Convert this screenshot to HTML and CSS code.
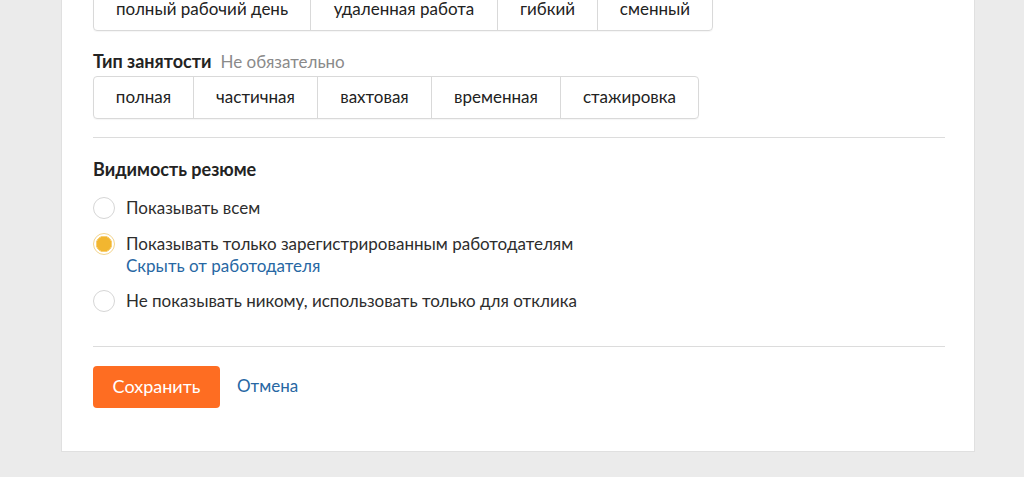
FILE: index.html
```html
<!DOCTYPE html>
<html lang="ru">
<head>
<meta charset="utf-8">
<link rel="stylesheet" href="styles.css">
</head>
<body>
<div class="card">
  <div class="segments seg-top">
    <span class="seg seg-a">полный рабочий день</span>
    <span class="seg seg-b">удаленная работа</span>
    <span class="seg seg-c">гибкий</span>
    <span class="seg seg-d">сменный</span>
  </div>

  <div class="field-label"><b>Тип занятости</b><span class="optional">Не обязательно</span></div>
  <div class="segments">
    <span class="seg s1">полная</span>
    <span class="seg s2">частичная</span>
    <span class="seg s3">вахтовая</span>
    <span class="seg s4">временная</span>
    <span class="seg s5">стажировка</span>
  </div>

  <hr class="divider first">

  <h3 class="section-title">Видимость резюме</h3>
  <div class="radios">
    <label class="radio"><span class="dot"></span><span class="radio-text">Показывать всем</span></label>
    <label class="radio checked"><span class="dot"></span><span class="radio-text">Показывать только зарегистрированным работодателям<a class="link" href="#">Скрыть от работодателя</a></span></label>
    <label class="radio"><span class="dot"></span><span class="radio-text">Не показывать никому, использовать только для отклика</span></label>
  </div>

  <hr class="divider second">

  <div class="actions">
    <button class="save">Сохранить</button>
    <a class="cancel" href="#">Отмена</a>
  </div>
</div>
</body>
</html>
```

FILE: styles.css
```css
* { box-sizing: border-box; }
html, body { margin: 0; padding: 0; }
body {
  background: #ebebeb;
  font-family: Lato, "Open Sans", Arial, sans-serif;
  color: #232323;
  height: 477px;
  overflow: hidden;
}
.card {
  background: #fff;
  border: 1px solid #e0e0e0;
  border-top: none;
  margin: -12px 0 0 61px;
  width: 914px;
  padding: 0 29px 43px 31px;
}
.segments {
  display: inline-flex;
  border: 1px solid #d9d9d9;
  border-radius: 4px;
  height: 43px;
  box-shadow: 0 1px 1px rgba(0,0,0,0.04);
}
.seg {
  display: flex;
  align-items: center;
  justify-content: center;
  font-size: 17px;
  color: #222;
  border-left: 1px solid #d9d9d9;
  padding-bottom: 2px;
}
.seg:first-child { border-left: none; }
.seg-a { width: 216px; }
.seg-b { width: 187px; }
.seg-c { width: 100px; }
.seg-d { width: 115px; }
.s1 { width: 99px; }
.s2 { width: 124px; }
.s3 { width: 114px; }
.s4 { width: 129px; }
.s5 { width: 138px; }

.field-label {
  margin-top: 20px;
  margin-bottom: 4px;
  line-height: 20px;
  display: flex;
  align-items: baseline;
  gap: 9px;
}
.field-label b { font-weight: 700; color: #232323; font-size: 18px; }
.optional { color: #8a8a8a; font-size: 17px; }

.divider {
  border: none;
  border-top: 1px solid #dcdcdc;
  margin: 18px 0 0;
  height: 0;
}
.section-title {
  margin: 20px 0 0;
  font-size: 18px;
  line-height: 22px;
  font-weight: 700;
  color: #232323;
}
.radios {
  display: flex;
  flex-direction: column;
  gap: 15px;
  margin-top: 18px;
}
.radio {
  display: flex;
  align-items: flex-start;
  gap: 11px;
  font-size: 17px;
  line-height: 20px;
  color: #2d2d2d;
}
.dot {
  width: 22px;
  height: 22px;
  border-radius: 50%;
  border: 1px solid #d6d6d6;
  background: #fff;
  flex: none;
  margin-top: -1px;
}
.checked .dot {
  border: 1px solid #f3d58e;
  background: radial-gradient(circle, #f2b630 0 7px, #f7cf73 7.5px 8px, #fff 8.5px);
}
.radio-text { display: flex; flex-direction: column; }
.link {
  color: #2767a3;
  text-decoration: none;
  margin-top: 2px;
}
.divider.second { margin-top: 34px; }
.actions {
  display: flex;
  align-items: center;
  gap: 17px;
  margin-top: 19px;
}
.save {
  background: #fe6d22;
  color: #fff;
  border: none;
  border-radius: 4px;
  font-family: inherit;
  font-size: 18px;
  width: 127px;
  height: 42px;
  padding: 0 0 3px;
}
.cancel {
  color: #2767a3;
  text-decoration: none;
  font-size: 17px;
  padding-bottom: 4px;
}
```
